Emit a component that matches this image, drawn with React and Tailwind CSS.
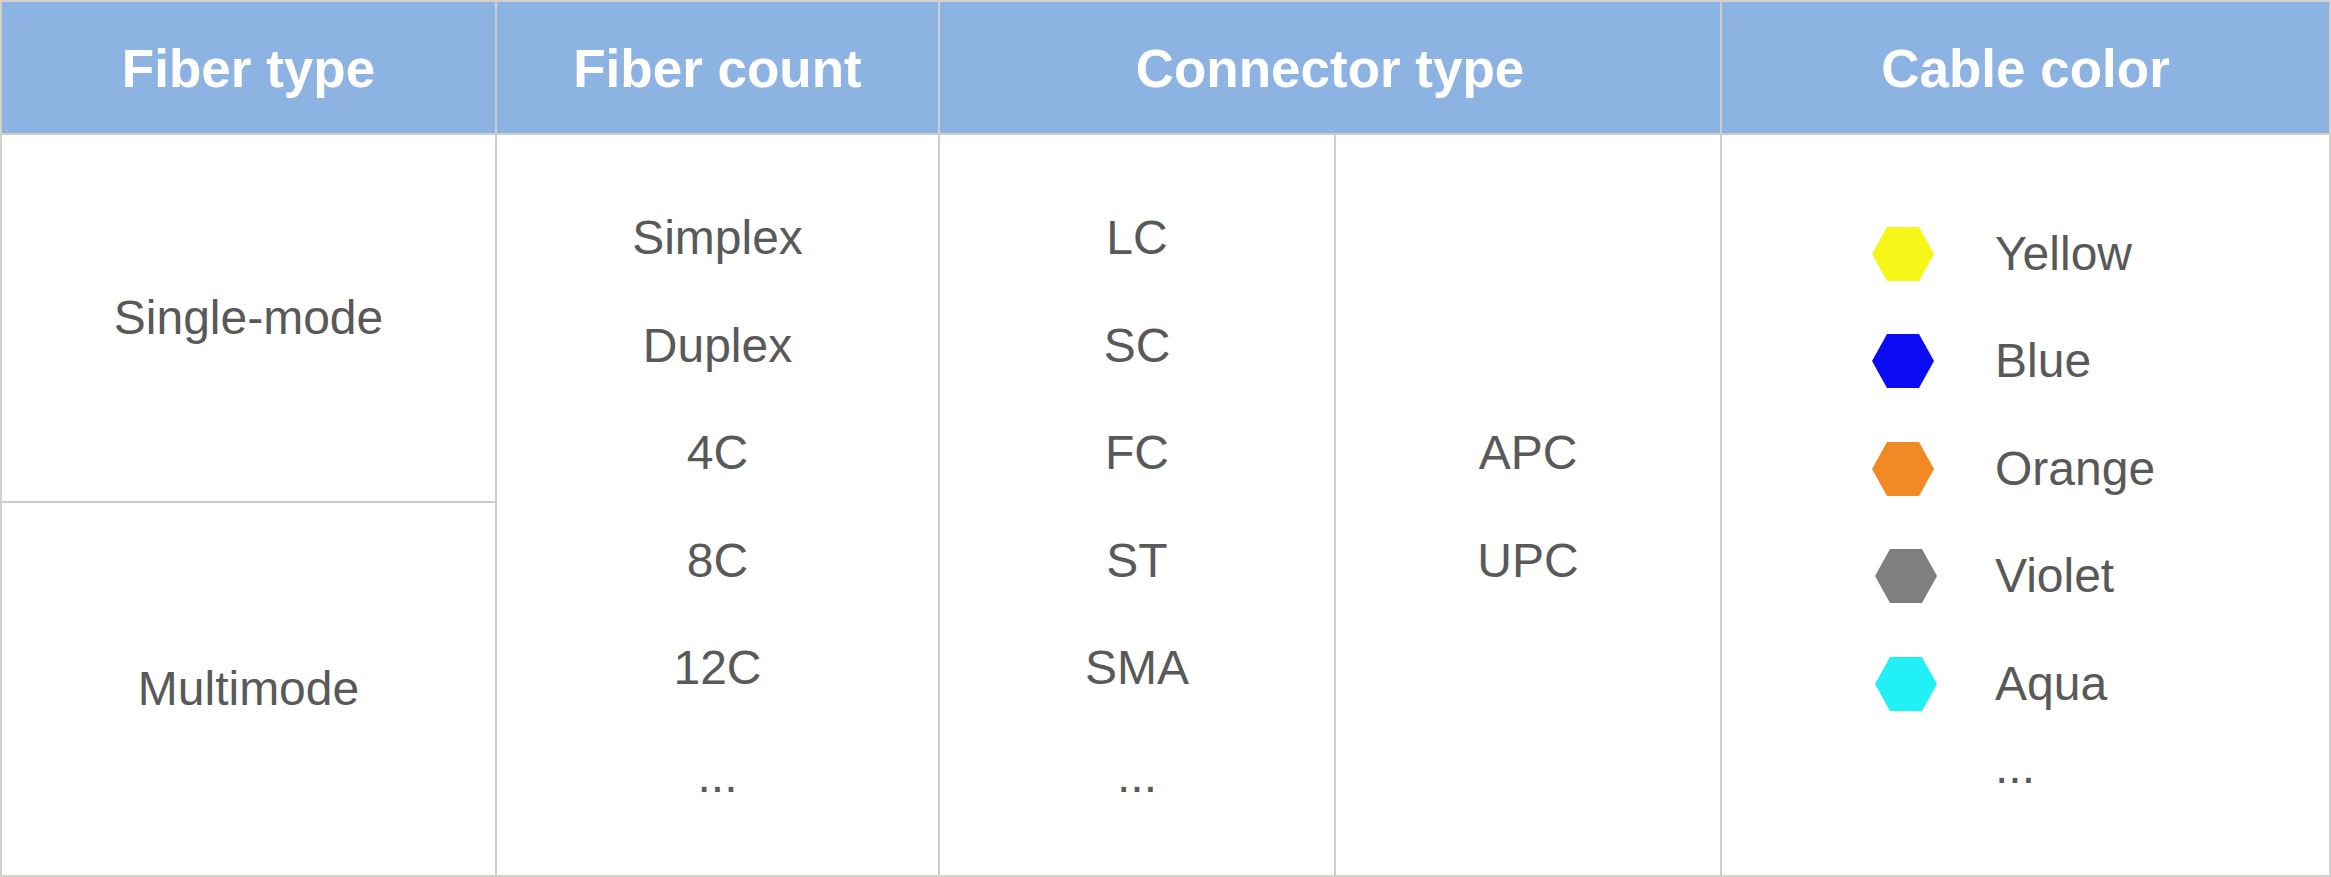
const counts = ["Simplex", "Duplex", "4C", "8C", "12C", "..."];
const connectors = ["LC", "SC", "FC", "ST", "SMA", "..."];
const polish = ["APC", "UPC"];
const colors = [
  { name: "Yellow", fill: "#f6f619", shift: false },
  { name: "Blue", fill: "#0c0cf4", shift: false },
  { name: "Orange", fill: "#f18a25", shift: false },
  { name: "Violet", fill: "#7f7f7f", shift: true },
  { name: "Aqua", fill: "#21f1f6", shift: true },
];

const Hexagon = ({ fill }) => (
  <svg width="64" height="56" viewBox="0 0 64 56" className="shrink-0">
    <polygon points="16,1 48,1 63,28 48,55 16,55 1,28" fill={fill} />
  </svg>
);

const HeaderCell = ({ children, className = "" }) => (
  <div
    className={`flex items-center justify-center bg-[#8db3e2] border-b-2 border-[#cdcdcd] text-white font-bold text-[53px] pt-[2px] ${className}`}
  >
    {children}
  </div>
);

const ItemList = ({ items }) => (
  <div className="flex flex-col items-center justify-center h-full pt-[3px]">
    {items.map((item, i) => (
      <div key={i} className="h-[107.5px] leading-[107.5px]">
        {item}
      </div>
    ))}
  </div>
);

const App = () => {
  return (
    <div className="w-[2331px] h-[877px] bg-white font-['Liberation_Sans',Arial,sans-serif]">
      <div className="grid grid-cols-[493px_443px_396px_386px_1fr] grid-rows-[133px_1fr] h-full border-2 border-[#d2d1cd] text-[48px] text-[#595959]">
        <HeaderCell>Fiber type</HeaderCell>
        <HeaderCell className="border-l-2">Fiber count</HeaderCell>
        <HeaderCell className="col-span-2 border-l-2">Connector type</HeaderCell>
        <HeaderCell className="border-l-2">Cable color</HeaderCell>

        <div className="flex flex-col">
          <div className="h-[368px] flex items-center justify-center border-b-2 border-[#cdcdcd]">
            Single-mode
          </div>
          <div className="flex-1 flex items-center justify-center">
            Multimode
          </div>
        </div>

        <div className="border-l-2 border-[#cdcdcd]">
          <ItemList items={counts} />
        </div>

        <div className="border-l-2 border-[#cdcdcd]">
          <ItemList items={connectors} />
        </div>

        <div className="border-l-2 border-[#cdcdcd]">
          <ItemList items={polish} />
        </div>

        <div className="border-l-2 border-[#cdcdcd] pt-[65px] pl-[149px]">
          {colors.map((c) => (
            <div key={c.name} className="flex items-center h-[107.5px]">
              <div className={c.shift ? "ml-[3px] mr-[57px]" : "mr-[60px]"}>
                <Hexagon fill={c.fill} />
              </div>
              <span>{c.name}</span>
            </div>
          ))}
          <div className="h-[40px] leading-[40px] mt-[9px] pl-[124px]">...</div>
        </div>
      </div>
    </div>
  );
};

export default App;
